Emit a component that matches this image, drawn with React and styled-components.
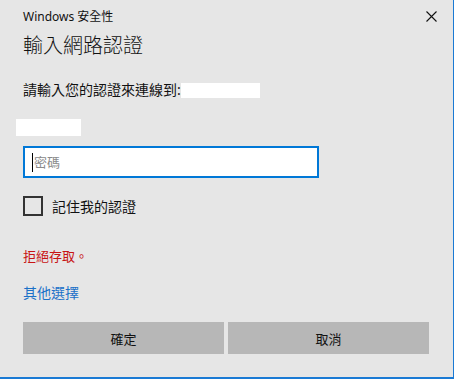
import React from "react";
import styled, { createGlobalStyle } from "styled-components";

const GlobalStyle = createGlobalStyle`
  html, body {
    margin: 0;
    padding: 0;
    background: #e6e6e6;
  }
  * {
    box-sizing: border-box;
  }
`;

const App = () => {
  return (
    <>
      <GlobalStyle />
      <Window>
        {/* Title bar */}
        <TitleBar>
          <TitleText>Windows 安全性</TitleText>
          <CloseButton aria-label="關閉">
            <svg width="11" height="11" viewBox="0 0 11 11">
              <path d="M0.5 0.5 L10.5 10.5 M10.5 0.5 L0.5 10.5" stroke="#111" strokeWidth="1.1" fill="none" />
            </svg>
          </CloseButton>
        </TitleBar>

        {/* Body */}
        <Body>
          <Heading>輸入網路認證</Heading>
          <PromptRow>
            <Prompt>請輸入您的認證來連線到:</Prompt>
            <Redacted $w={79} $h={15} />
          </PromptRow>
          <UserRedacted $w={65} $h={17} />
          <InputWrap>
            <PasswordInput type="password" placeholder="密碼" />
            <Caret />
          </InputWrap>
          <CheckRow>
            <CheckBox type="checkbox" id="remember" />
            <CheckLabel htmlFor="remember">記住我的認證</CheckLabel>
          </CheckRow>
          <ErrorText>拒絕存取。</ErrorText>
          <MoreLink href="#">其他選擇</MoreLink>
          <ButtonRow>
            <DialogButton>確定</DialogButton>
            <DialogButton>取消</DialogButton>
          </ButtonRow>
        </Body>
      </Window>
    </>
  );
};

const font = `"Segoe UI", "Noto Sans", "Noto Sans CJK TC", sans-serif`;

const Window = styled.div`
  width: 454px;
  height: 379px;
  background: #e6e6e6;
  border-right: 1px solid #1a7ad4;
  border-bottom: 2px solid #1a7ad4;
  display: flex;
  flex-direction: column;
  font-family: ${font};
  color: #000;
`;

const TitleBar = styled.div`
  height: 32px;
  display: flex;
  align-items: center;
  justify-content: space-between;
  padding: 0 16px 0 23px;
`;

const TitleText = styled.span`
  font-size: 12px;
  color: #111;
`;

const CloseButton = styled.button`
  background: none;
  border: none;
  padding: 0;
  width: 11px;
  height: 11px;
  display: flex;
  cursor: pointer;
`;

const Body = styled.div`
  display: flex;
  flex-direction: column;
  align-items: flex-start;
  padding: 0 24px 0 23px;
`;

const Heading = styled.h1`
  margin: 0;
  font-size: 20px;
  font-weight: 300;
  line-height: 28px;
  color: #111;
`;

const PromptRow = styled.div`
  margin-top: 22px;
  display: flex;
  align-items: center;
  height: 16px;
`;

const Prompt = styled.span`
  font-size: 14px;
  line-height: 16px;
  color: #111;
`;

const Redacted = styled.span`
  display: block;
  width: ${(p) => p.$w}px;
  height: ${(p) => p.$h}px;
  background: #fff;
`;

const UserRedacted = styled(Redacted)`
  margin: 21px 0 0 -7px;
`;

const InputWrap = styled.div`
  position: relative;
  margin-top: 10px;
  width: 296px;
  height: 32px;
`;

const PasswordInput = styled.input`
  display: block;
  width: 100%;
  height: 100%;
  margin: 0;
  border: 2px solid #0078d7;
  background: #fff;
  padding: 0 8px 0 9px;
  font-family: ${font};
  font-size: 13px;
  outline: none;
  caret-color: transparent;

  &::placeholder {
    color: #8a8a8a;
  }
`;

const Caret = styled.span`
  position: absolute;
  left: 9px;
  top: 7px;
  width: 1px;
  height: 19px;
  background: #000;
`;

const CheckRow = styled.div`
  margin-top: 18px;
  display: flex;
  align-items: center;
  gap: 9px;
`;

const CheckBox = styled.input`
  appearance: none;
  margin: 0;
  width: 20px;
  height: 20px;
  border: 2px solid #333;
  background: transparent;
`;

const CheckLabel = styled.label`
  font-size: 14px;
  color: #111;
`;

const ErrorText = styled.div`
  margin-top: 32px;
  font-size: 13px;
  line-height: 16px;
  color: #c81414;
`;

const MoreLink = styled.a`
  margin-top: 21px;
  font-size: 14px;
  line-height: 16px;
  color: #1a70c8;
  text-decoration: none;
`;

const ButtonRow = styled.div`
  margin-top: 21px;
  width: 100%;
  display: grid;
  grid-template-columns: 1fr 1fr;
  gap: 4px;
`;

const DialogButton = styled.button`
  height: 32px;
  border: none;
  background: #b7b7b7;
  font-family: ${font};
  font-size: 13px;
  color: #111;
`;

export default App;
